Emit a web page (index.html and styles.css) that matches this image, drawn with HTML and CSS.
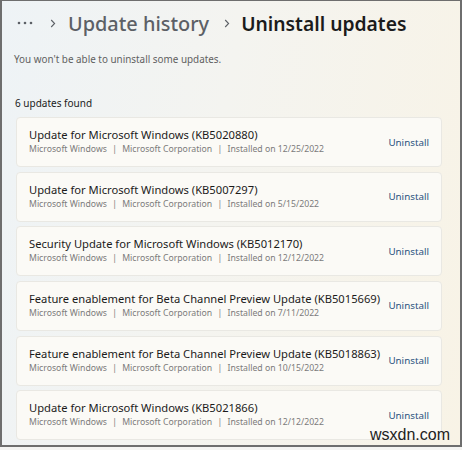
FILE: index.html
```html
<!DOCTYPE html>
<html>
<head>
<meta charset="utf-8">
<link rel="stylesheet" href="styles.css">
</head>
<body>
<div class="frame">
  <div class="window">
    <header class="crumbs">
      <span class="dots">
        <svg width="16" height="4" viewBox="0 0 16 4"><circle cx="2" cy="2" r="1.3" fill="#5c6066"/><circle cx="8" cy="2" r="1.3" fill="#5c6066"/><circle cx="14" cy="2" r="1.3" fill="#5c6066"/></svg>
      </span>
      <span class="chev"><svg width="6" height="9" viewBox="0 0 6 9"><path d="M1.2 1 L4.6 4.5 L1.2 8" fill="none" stroke="#5c6066" stroke-width="1.1"/></svg></span>
      <span class="crumb">Update history</span>
      <span class="chev chev-b"><svg width="6" height="9" viewBox="0 0 6 9"><path d="M1.2 1 L4.6 4.5 L1.2 8" fill="none" stroke="#5c6066" stroke-width="1.1"/></svg></span>
      <span class="crumb current">Uninstall updates</span>
    </header>
    <p class="note">You won't be able to uninstall some updates.</p>
    <p class="count">6 updates found</p>
    <ul class="list">
      <li class="card">
        <div class="info">
          <div class="title">Update for Microsoft Windows (KB5020880)</div>
          <div class="meta">Microsoft Windows <span class="sep">|</span> Microsoft Corporation <span class="sep">|</span> Installed on 12/25/2022</div>
        </div>
        <span class="action">Uninstall</span>
      </li>
      <li class="card">
        <div class="info">
          <div class="title">Update for Microsoft Windows (KB5007297)</div>
          <div class="meta">Microsoft Windows <span class="sep">|</span> Microsoft Corporation <span class="sep">|</span> Installed on 5/15/2022</div>
        </div>
        <span class="action">Uninstall</span>
      </li>
      <li class="card">
        <div class="info">
          <div class="title">Security Update for Microsoft Windows (KB5012170)</div>
          <div class="meta">Microsoft Windows <span class="sep">|</span> Microsoft Corporation <span class="sep">|</span> Installed on 12/12/2022</div>
        </div>
        <span class="action">Uninstall</span>
      </li>
      <li class="card">
        <div class="info">
          <div class="title">Feature enablement for Beta Channel Preview Update (KB5015669)</div>
          <div class="meta">Microsoft Windows <span class="sep">|</span> Microsoft Corporation <span class="sep">|</span> Installed on 7/11/2022</div>
        </div>
        <span class="action">Uninstall</span>
      </li>
      <li class="card">
        <div class="info">
          <div class="title">Feature enablement for Beta Channel Preview Update (KB5018863)</div>
          <div class="meta">Microsoft Windows <span class="sep">|</span> Microsoft Corporation <span class="sep">|</span> Installed on 10/15/2022</div>
        </div>
        <span class="action">Uninstall</span>
      </li>
      <li class="card">
        <div class="info">
          <div class="title">Update for Microsoft Windows (KB5021866)</div>
          <div class="meta">Microsoft Windows <span class="sep">|</span> Microsoft Corporation <span class="sep">|</span> Installed on 12/12/2022</div>
        </div>
        <span class="action">Uninstall</span>
      </li>
    </ul>
    <span class="watermark">wsxdn.com</span>
  </div>
</div>
</body>
</html>
```
FILE: styles.css
```css
* { box-sizing: border-box; }
html, body { margin: 0; padding: 0; background: #f4f4f2; }
body {
  width: 462px;
  height: 450px;
  font-family: "Noto Sans", "Open Sans", "Liberation Sans", sans-serif;
  overflow: hidden;
}
.frame {
  width: 462px;
  height: 447px;
  border: 2px solid #6e6e6e;
  border-top-width: 1px;
}
.window {
  position: relative;
  height: 100%;
  background: linear-gradient(100deg, #eef3f6 0%, #f4f4f0 45%, #f8f3e6 100%);
  padding: 0 18px 0 12px;
}
.crumbs {
  display: flex;
  align-items: center;
  height: 44px;
  padding-left: 3px;
  white-space: nowrap;
}
.dots { display: flex; align-items: center; width: 16px; margin-right: 17px; }
.chev { display: flex; align-items: center; margin-right: 12px; }
.chev-b { margin-right: 11px; }
.crumb {
  font-size: 19.9px;
  font-weight: 500;
  color: #5c6066;
  margin-right: 15px;
}
.crumb.current { color: #1b1b1b; font-weight: 600; font-size: 19.3px; margin-right: 0; }
.note {
  margin: 8px 0 0 0;
  font-size: 9.9px;
  color: #5f5f5f;
  line-height: 13.6px;
}
.count {
  margin: 30px 0 0 1px;
  font-size: 10px;
  color: #1b1b1b;
  line-height: 13.6px;
}
.list {
  list-style: none;
  margin: 7px 0 0 2px;
  padding: 0;
  display: flex;
  flex-direction: column;
  gap: 4.6px;
}
.card {
  height: 50px;
  display: flex;
  align-items: center;
  justify-content: space-between;
  background: #fbfaf6;
  border: 1px solid #e9e8e3;
  border-radius: 4px;
  padding: 0 12px 0 12px;
}
.info { display: flex; flex-direction: column; gap: 1px; }
.title { font-size: 11.2px; color: #1b1b1b; line-height: 14px; }
.meta { font-size: 8.7px; color: #7b7b7b; line-height: 13px; }
.sep { margin: 0 3px; }
.action { font-size: 9.8px; color: #2b5380; }
.watermark {
  position: absolute;
  right: 10px;
  bottom: 1px;
  font-size: 16px;
  color: #222;
  font-family: "Liberation Sans", sans-serif;
}
```
